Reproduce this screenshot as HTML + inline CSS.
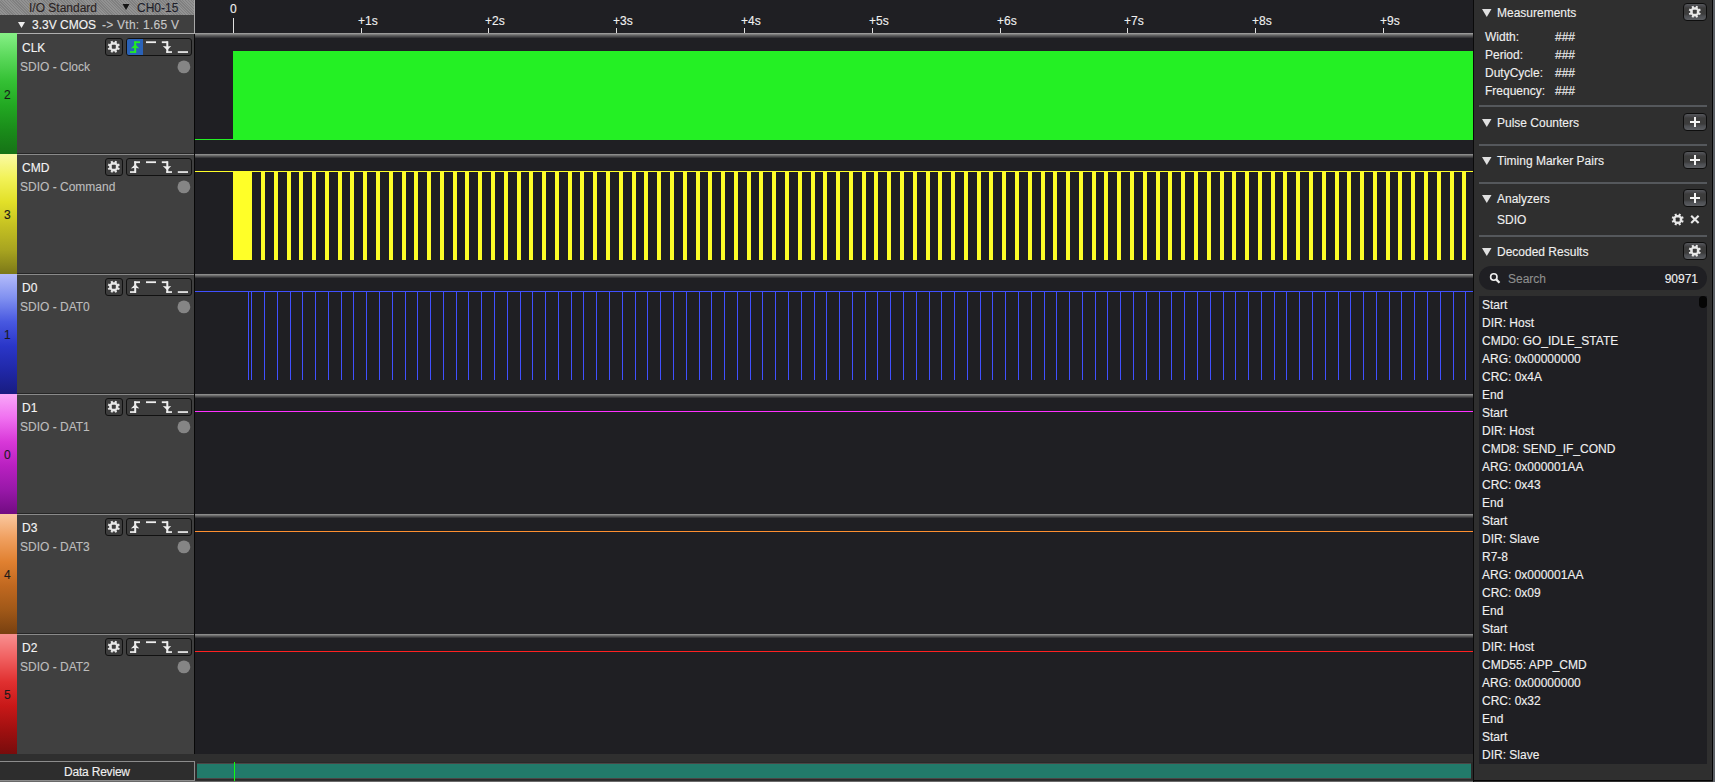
<!DOCTYPE html>
<html><head><meta charset="utf-8">
<style>
*{margin:0;padding:0;box-sizing:border-box}
html,body{width:1715px;height:782px;overflow:hidden;background:#2f2f2f;font-family:"Liberation Sans", sans-serif;font-size:12px;color:#e8e8e8}
.abs{position:absolute}
.t{position:absolute;white-space:pre;line-height:14px;-webkit-text-stroke:0.12px currentColor}
.btn{position:absolute;border:1px solid #0c0c0c;border-radius:4px;background:linear-gradient(#4a4a4a,#3c3c3c 60%,#444 100%)}
.pbtn{position:absolute;border:1px solid #0e0e0e;border-radius:4px;background:linear-gradient(#56585c 0,#4a4a4e 2px,#3c3c3c 4px,#3c3c3c 10px,#4c4e52 12px,#5c5e62 100%)}
</style></head><body>

<div class="abs" style="left:0;top:0;width:194px;height:15px;background:repeating-linear-gradient(45deg,#929292 0 1px,#808080 1px 2px)"></div>
<div class="abs" style="left:0;top:15px;width:194px;height:18px;background:#3f3f3f"></div>
<div class="t" style="left:29px;top:1px;color:#2a2222">I/O Standard</div>
<svg class="abs" style="left:0;top:0" width="195" height="33"><polygon points="122.5,4 129.5,4 126,10" fill="#151515"/><polygon points="18,22 25,22 21.5,28" fill="#eeeeee"/></svg>
<div class="t" style="left:137px;top:1px;color:#1e1e2a">CH0-15</div>
<div class="t" style="left:32px;top:18px;color:#f4f4f4">3.3V CMOS</div>
<div class="t" style="left:102px;top:18px;color:#c8c8c8;letter-spacing:0.25px">-&gt; Vth: 1.65 V</div>
<div class="abs" style="left:194px;top:0;width:1px;height:33px;background:#a8a8a8"></div>
<div class="abs" style="left:195px;top:0;width:1278px;height:33px;background:#1f1f23"></div>
<svg class="abs" style="left:0;top:0" width="1715" height="40"><rect x="233" y="18" width="1" height="15" fill="#e0e0e0"/><rect x="361" y="28" width="1" height="5" fill="#e0e0e0"/><rect x="488" y="28" width="1" height="5" fill="#e0e0e0"/><rect x="616" y="28" width="1" height="5" fill="#e0e0e0"/><rect x="744" y="28" width="1" height="5" fill="#e0e0e0"/><rect x="872" y="28" width="1" height="5" fill="#e0e0e0"/><rect x="1000" y="28" width="1" height="5" fill="#e0e0e0"/><rect x="1127" y="28" width="1" height="5" fill="#e0e0e0"/><rect x="1255" y="28" width="1" height="5" fill="#e0e0e0"/><rect x="1383" y="28" width="1" height="5" fill="#e0e0e0"/></svg>
<div class="t" style="left:230px;top:2px;color:#f0f0f0">0</div>
<div class="t" style="left:358px;top:14px;color:#f0f0f0">+1s</div>
<div class="t" style="left:485px;top:14px;color:#f0f0f0">+2s</div>
<div class="t" style="left:613px;top:14px;color:#f0f0f0">+3s</div>
<div class="t" style="left:741px;top:14px;color:#f0f0f0">+4s</div>
<div class="t" style="left:869px;top:14px;color:#f0f0f0">+5s</div>
<div class="t" style="left:997px;top:14px;color:#f0f0f0">+6s</div>
<div class="t" style="left:1124px;top:14px;color:#f0f0f0">+7s</div>
<div class="t" style="left:1252px;top:14px;color:#f0f0f0">+8s</div>
<div class="t" style="left:1380px;top:14px;color:#f0f0f0">+9s</div>
<div class="abs" style="left:17px;top:33px;width:178px;height:2px;background:linear-gradient(#b8b8b8,#989898)"></div>
<div class="abs" style="left:195px;top:33px;width:1278px;height:5px;background:linear-gradient(#a8a8a8,#6a6a6a 40%,#2a2a2e)"></div>
<div class="abs" style="left:0;top:33px;width:17px;height:121px;background:linear-gradient(#86f086,#5ad85a,#34c034,#22a822,#1a8c1a,#167216)"></div>
<div class="t" style="left:4px;top:88px;color:#1a1a1a">2</div>
<div class="abs" style="left:17px;top:34px;width:177px;height:120px;background:#404040"></div>
<div class="t" style="left:22px;top:41px;color:#f4f4f4">CLK</div>
<div class="t" style="left:20px;top:60px;color:#bdbdbd">SDIO - Clock</div>
<div class="abs" style="left:105px;top:38px;width:18px;height:18px;border:1px solid #111;border-radius:3px;background:#3c3c3c"></div>
<div class="abs" style="left:126px;top:38px;width:66px;height:18px;border:1px solid #111;border-radius:3px;background:#3c3c3c"></div>
<div class="abs" style="left:127px;top:39px;width:16px;height:16px;background:#2a62b8;border-radius:2px 0 0 2px"></div>
<svg class="abs" style="left:0;top:34px" width="195" height="40"><g transform="translate(113.8,12.8)"><circle r="4.6" fill="#e6e6e6"/><rect x="-1.05" y="-6.1" width="2.1" height="2.5" fill="#e6e6e6" transform="rotate(22.5)"/><rect x="-1.05" y="-6.1" width="2.1" height="2.5" fill="#e6e6e6" transform="rotate(67.5)"/><rect x="-1.05" y="-6.1" width="2.1" height="2.5" fill="#e6e6e6" transform="rotate(112.5)"/><rect x="-1.05" y="-6.1" width="2.1" height="2.5" fill="#e6e6e6" transform="rotate(157.5)"/><rect x="-1.05" y="-6.1" width="2.1" height="2.5" fill="#e6e6e6" transform="rotate(202.5)"/><rect x="-1.05" y="-6.1" width="2.1" height="2.5" fill="#e6e6e6" transform="rotate(247.5)"/><rect x="-1.05" y="-6.1" width="2.1" height="2.5" fill="#e6e6e6" transform="rotate(292.5)"/><rect x="-1.05" y="-6.1" width="2.1" height="2.5" fill="#e6e6e6" transform="rotate(337.5)"/><rect x="-2.0" y="-2.0" width="4.0" height="4.0" rx="0.8" fill="#3c3c3c"/></g><rect x="130" y="17.2" width="6" height="1.7" fill="#22ee22"/><rect x="134.2" y="7.3" width="2" height="11.6" fill="#22ee22"/><rect x="134.2" y="7.3" width="5.8" height="1.8" fill="#22ee22"/><polygon points="130.8,14.4 135.2,13.8 139.4,14.4 135.2,10.2" fill="#22ee22"/><rect x="146" y="7.3" width="10" height="1.8" fill="#eeeeee"/><rect x="161.8" y="7.3" width="6" height="1.8" fill="#eeeeee"/><rect x="166.3" y="7.3" width="2" height="11.6" fill="#eeeeee"/><rect x="166.3" y="17.2" width="5.7" height="1.7" fill="#eeeeee"/><polygon points="162.8,11.9 167.2,12.5 171.2,11.9 167.2,16.3" fill="#eeeeee"/><rect x="177.8" y="17.2" width="10.2" height="1.7" fill="#eeeeee"/></svg>
<svg class="abs" style="left:0;top:34px" width="195" height="45"><circle cx="183.9" cy="32.9" r="6.4" fill="#858585"/></svg>
<div class="abs" style="left:194px;top:34px;width:1px;height:120px;background:#080808"></div>
<div class="abs" style="left:195px;top:38px;width:1278px;height:116px;background:#1f1f23"></div>
<div class="abs" style="left:0;top:154px;width:17px;height:120px;background:linear-gradient(#fafaa4,#f2f258,#e2e028,#c4c022,#a8a420,#7c7818)"></div>
<div class="t" style="left:4px;top:208px;color:#1a1a1a">3</div>
<div class="abs" style="left:17px;top:154px;width:177px;height:120px;background:#404040"></div>
<div class="abs" style="left:17px;top:154px;width:178px;height:1px;background:#8a8a8a"></div>
<div class="abs" style="left:17px;top:153px;width:177px;height:1px;background:#262626"></div>
<div class="t" style="left:22px;top:161px;color:#f4f4f4">CMD</div>
<div class="t" style="left:20px;top:180px;color:#bdbdbd">SDIO - Command</div>
<div class="abs" style="left:105px;top:158px;width:18px;height:18px;border:1px solid #111;border-radius:3px;background:#3c3c3c"></div>
<div class="abs" style="left:126px;top:158px;width:66px;height:18px;border:1px solid #111;border-radius:3px;background:#3c3c3c"></div>
<svg class="abs" style="left:0;top:154px" width="195" height="40"><g transform="translate(113.8,12.8)"><circle r="4.6" fill="#e6e6e6"/><rect x="-1.05" y="-6.1" width="2.1" height="2.5" fill="#e6e6e6" transform="rotate(22.5)"/><rect x="-1.05" y="-6.1" width="2.1" height="2.5" fill="#e6e6e6" transform="rotate(67.5)"/><rect x="-1.05" y="-6.1" width="2.1" height="2.5" fill="#e6e6e6" transform="rotate(112.5)"/><rect x="-1.05" y="-6.1" width="2.1" height="2.5" fill="#e6e6e6" transform="rotate(157.5)"/><rect x="-1.05" y="-6.1" width="2.1" height="2.5" fill="#e6e6e6" transform="rotate(202.5)"/><rect x="-1.05" y="-6.1" width="2.1" height="2.5" fill="#e6e6e6" transform="rotate(247.5)"/><rect x="-1.05" y="-6.1" width="2.1" height="2.5" fill="#e6e6e6" transform="rotate(292.5)"/><rect x="-1.05" y="-6.1" width="2.1" height="2.5" fill="#e6e6e6" transform="rotate(337.5)"/><rect x="-2.0" y="-2.0" width="4.0" height="4.0" rx="0.8" fill="#3c3c3c"/></g><rect x="130" y="17.2" width="6" height="1.7" fill="#eeeeee"/><rect x="134.2" y="7.3" width="2" height="11.6" fill="#eeeeee"/><rect x="134.2" y="7.3" width="5.8" height="1.8" fill="#eeeeee"/><polygon points="130.8,14.4 135.2,13.8 139.4,14.4 135.2,10.2" fill="#eeeeee"/><rect x="146" y="7.3" width="10" height="1.8" fill="#eeeeee"/><rect x="161.8" y="7.3" width="6" height="1.8" fill="#eeeeee"/><rect x="166.3" y="7.3" width="2" height="11.6" fill="#eeeeee"/><rect x="166.3" y="17.2" width="5.7" height="1.7" fill="#eeeeee"/><polygon points="162.8,11.9 167.2,12.5 171.2,11.9 167.2,16.3" fill="#eeeeee"/><rect x="177.8" y="17.2" width="10.2" height="1.7" fill="#eeeeee"/></svg>
<svg class="abs" style="left:0;top:154px" width="195" height="45"><circle cx="183.9" cy="32.9" r="6.4" fill="#858585"/></svg>
<div class="abs" style="left:194px;top:154px;width:1px;height:120px;background:#080808"></div>
<div class="abs" style="left:195px;top:154px;width:1278px;height:120px;background:#1f1f23"></div>
<div class="abs" style="left:195px;top:154px;width:1278px;height:4px;background:linear-gradient(#9a9a9a,#5e5e5e 50%,#2a2a2e)"></div>
<div class="abs" style="left:0;top:274px;width:17px;height:120px;background:linear-gradient(#b4bcfa,#8090f0,#4858e0,#2a36c8,#2028a8,#181c80)"></div>
<div class="t" style="left:4px;top:328px;color:#1a1a1a">1</div>
<div class="abs" style="left:17px;top:274px;width:177px;height:120px;background:#404040"></div>
<div class="abs" style="left:17px;top:274px;width:178px;height:1px;background:#8a8a8a"></div>
<div class="abs" style="left:17px;top:273px;width:177px;height:1px;background:#262626"></div>
<div class="t" style="left:22px;top:281px;color:#f4f4f4">D0</div>
<div class="t" style="left:20px;top:300px;color:#bdbdbd">SDIO - DAT0</div>
<div class="abs" style="left:105px;top:278px;width:18px;height:18px;border:1px solid #111;border-radius:3px;background:#3c3c3c"></div>
<div class="abs" style="left:126px;top:278px;width:66px;height:18px;border:1px solid #111;border-radius:3px;background:#3c3c3c"></div>
<svg class="abs" style="left:0;top:274px" width="195" height="40"><g transform="translate(113.8,12.8)"><circle r="4.6" fill="#e6e6e6"/><rect x="-1.05" y="-6.1" width="2.1" height="2.5" fill="#e6e6e6" transform="rotate(22.5)"/><rect x="-1.05" y="-6.1" width="2.1" height="2.5" fill="#e6e6e6" transform="rotate(67.5)"/><rect x="-1.05" y="-6.1" width="2.1" height="2.5" fill="#e6e6e6" transform="rotate(112.5)"/><rect x="-1.05" y="-6.1" width="2.1" height="2.5" fill="#e6e6e6" transform="rotate(157.5)"/><rect x="-1.05" y="-6.1" width="2.1" height="2.5" fill="#e6e6e6" transform="rotate(202.5)"/><rect x="-1.05" y="-6.1" width="2.1" height="2.5" fill="#e6e6e6" transform="rotate(247.5)"/><rect x="-1.05" y="-6.1" width="2.1" height="2.5" fill="#e6e6e6" transform="rotate(292.5)"/><rect x="-1.05" y="-6.1" width="2.1" height="2.5" fill="#e6e6e6" transform="rotate(337.5)"/><rect x="-2.0" y="-2.0" width="4.0" height="4.0" rx="0.8" fill="#3c3c3c"/></g><rect x="130" y="17.2" width="6" height="1.7" fill="#eeeeee"/><rect x="134.2" y="7.3" width="2" height="11.6" fill="#eeeeee"/><rect x="134.2" y="7.3" width="5.8" height="1.8" fill="#eeeeee"/><polygon points="130.8,14.4 135.2,13.8 139.4,14.4 135.2,10.2" fill="#eeeeee"/><rect x="146" y="7.3" width="10" height="1.8" fill="#eeeeee"/><rect x="161.8" y="7.3" width="6" height="1.8" fill="#eeeeee"/><rect x="166.3" y="7.3" width="2" height="11.6" fill="#eeeeee"/><rect x="166.3" y="17.2" width="5.7" height="1.7" fill="#eeeeee"/><polygon points="162.8,11.9 167.2,12.5 171.2,11.9 167.2,16.3" fill="#eeeeee"/><rect x="177.8" y="17.2" width="10.2" height="1.7" fill="#eeeeee"/></svg>
<svg class="abs" style="left:0;top:274px" width="195" height="45"><circle cx="183.9" cy="32.9" r="6.4" fill="#858585"/></svg>
<div class="abs" style="left:194px;top:274px;width:1px;height:120px;background:#080808"></div>
<div class="abs" style="left:195px;top:274px;width:1278px;height:120px;background:#1f1f23"></div>
<div class="abs" style="left:195px;top:274px;width:1278px;height:4px;background:linear-gradient(#9a9a9a,#5e5e5e 50%,#2a2a2e)"></div>
<div class="abs" style="left:0;top:394px;width:17px;height:120px;background:linear-gradient(#f8a8f8,#f070f0,#d838d8,#b820c0,#9818a8,#720c82)"></div>
<div class="t" style="left:4px;top:448px;color:#1a1a1a">0</div>
<div class="abs" style="left:17px;top:394px;width:177px;height:120px;background:#404040"></div>
<div class="abs" style="left:17px;top:394px;width:178px;height:1px;background:#8a8a8a"></div>
<div class="abs" style="left:17px;top:393px;width:177px;height:1px;background:#262626"></div>
<div class="t" style="left:22px;top:401px;color:#f4f4f4">D1</div>
<div class="t" style="left:20px;top:420px;color:#bdbdbd">SDIO - DAT1</div>
<div class="abs" style="left:105px;top:398px;width:18px;height:18px;border:1px solid #111;border-radius:3px;background:#3c3c3c"></div>
<div class="abs" style="left:126px;top:398px;width:66px;height:18px;border:1px solid #111;border-radius:3px;background:#3c3c3c"></div>
<svg class="abs" style="left:0;top:394px" width="195" height="40"><g transform="translate(113.8,12.8)"><circle r="4.6" fill="#e6e6e6"/><rect x="-1.05" y="-6.1" width="2.1" height="2.5" fill="#e6e6e6" transform="rotate(22.5)"/><rect x="-1.05" y="-6.1" width="2.1" height="2.5" fill="#e6e6e6" transform="rotate(67.5)"/><rect x="-1.05" y="-6.1" width="2.1" height="2.5" fill="#e6e6e6" transform="rotate(112.5)"/><rect x="-1.05" y="-6.1" width="2.1" height="2.5" fill="#e6e6e6" transform="rotate(157.5)"/><rect x="-1.05" y="-6.1" width="2.1" height="2.5" fill="#e6e6e6" transform="rotate(202.5)"/><rect x="-1.05" y="-6.1" width="2.1" height="2.5" fill="#e6e6e6" transform="rotate(247.5)"/><rect x="-1.05" y="-6.1" width="2.1" height="2.5" fill="#e6e6e6" transform="rotate(292.5)"/><rect x="-1.05" y="-6.1" width="2.1" height="2.5" fill="#e6e6e6" transform="rotate(337.5)"/><rect x="-2.0" y="-2.0" width="4.0" height="4.0" rx="0.8" fill="#3c3c3c"/></g><rect x="130" y="17.2" width="6" height="1.7" fill="#eeeeee"/><rect x="134.2" y="7.3" width="2" height="11.6" fill="#eeeeee"/><rect x="134.2" y="7.3" width="5.8" height="1.8" fill="#eeeeee"/><polygon points="130.8,14.4 135.2,13.8 139.4,14.4 135.2,10.2" fill="#eeeeee"/><rect x="146" y="7.3" width="10" height="1.8" fill="#eeeeee"/><rect x="161.8" y="7.3" width="6" height="1.8" fill="#eeeeee"/><rect x="166.3" y="7.3" width="2" height="11.6" fill="#eeeeee"/><rect x="166.3" y="17.2" width="5.7" height="1.7" fill="#eeeeee"/><polygon points="162.8,11.9 167.2,12.5 171.2,11.9 167.2,16.3" fill="#eeeeee"/><rect x="177.8" y="17.2" width="10.2" height="1.7" fill="#eeeeee"/></svg>
<svg class="abs" style="left:0;top:394px" width="195" height="45"><circle cx="183.9" cy="32.9" r="6.4" fill="#858585"/></svg>
<div class="abs" style="left:194px;top:394px;width:1px;height:120px;background:#080808"></div>
<div class="abs" style="left:195px;top:394px;width:1278px;height:120px;background:#1f1f23"></div>
<div class="abs" style="left:195px;top:394px;width:1278px;height:4px;background:linear-gradient(#9a9a9a,#5e5e5e 50%,#2a2a2e)"></div>
<div class="abs" style="left:0;top:514px;width:17px;height:120px;background:linear-gradient(#fac8a0,#f0a060,#e08030,#c06820,#a05818,#784010)"></div>
<div class="t" style="left:4px;top:568px;color:#1a1a1a">4</div>
<div class="abs" style="left:17px;top:514px;width:177px;height:120px;background:#404040"></div>
<div class="abs" style="left:17px;top:514px;width:178px;height:1px;background:#8a8a8a"></div>
<div class="abs" style="left:17px;top:513px;width:177px;height:1px;background:#262626"></div>
<div class="t" style="left:22px;top:521px;color:#f4f4f4">D3</div>
<div class="t" style="left:20px;top:540px;color:#bdbdbd">SDIO - DAT3</div>
<div class="abs" style="left:105px;top:518px;width:18px;height:18px;border:1px solid #111;border-radius:3px;background:#3c3c3c"></div>
<div class="abs" style="left:126px;top:518px;width:66px;height:18px;border:1px solid #111;border-radius:3px;background:#3c3c3c"></div>
<svg class="abs" style="left:0;top:514px" width="195" height="40"><g transform="translate(113.8,12.8)"><circle r="4.6" fill="#e6e6e6"/><rect x="-1.05" y="-6.1" width="2.1" height="2.5" fill="#e6e6e6" transform="rotate(22.5)"/><rect x="-1.05" y="-6.1" width="2.1" height="2.5" fill="#e6e6e6" transform="rotate(67.5)"/><rect x="-1.05" y="-6.1" width="2.1" height="2.5" fill="#e6e6e6" transform="rotate(112.5)"/><rect x="-1.05" y="-6.1" width="2.1" height="2.5" fill="#e6e6e6" transform="rotate(157.5)"/><rect x="-1.05" y="-6.1" width="2.1" height="2.5" fill="#e6e6e6" transform="rotate(202.5)"/><rect x="-1.05" y="-6.1" width="2.1" height="2.5" fill="#e6e6e6" transform="rotate(247.5)"/><rect x="-1.05" y="-6.1" width="2.1" height="2.5" fill="#e6e6e6" transform="rotate(292.5)"/><rect x="-1.05" y="-6.1" width="2.1" height="2.5" fill="#e6e6e6" transform="rotate(337.5)"/><rect x="-2.0" y="-2.0" width="4.0" height="4.0" rx="0.8" fill="#3c3c3c"/></g><rect x="130" y="17.2" width="6" height="1.7" fill="#eeeeee"/><rect x="134.2" y="7.3" width="2" height="11.6" fill="#eeeeee"/><rect x="134.2" y="7.3" width="5.8" height="1.8" fill="#eeeeee"/><polygon points="130.8,14.4 135.2,13.8 139.4,14.4 135.2,10.2" fill="#eeeeee"/><rect x="146" y="7.3" width="10" height="1.8" fill="#eeeeee"/><rect x="161.8" y="7.3" width="6" height="1.8" fill="#eeeeee"/><rect x="166.3" y="7.3" width="2" height="11.6" fill="#eeeeee"/><rect x="166.3" y="17.2" width="5.7" height="1.7" fill="#eeeeee"/><polygon points="162.8,11.9 167.2,12.5 171.2,11.9 167.2,16.3" fill="#eeeeee"/><rect x="177.8" y="17.2" width="10.2" height="1.7" fill="#eeeeee"/></svg>
<svg class="abs" style="left:0;top:514px" width="195" height="45"><circle cx="183.9" cy="32.9" r="6.4" fill="#858585"/></svg>
<div class="abs" style="left:194px;top:514px;width:1px;height:120px;background:#080808"></div>
<div class="abs" style="left:195px;top:514px;width:1278px;height:120px;background:#1f1f23"></div>
<div class="abs" style="left:195px;top:514px;width:1278px;height:4px;background:linear-gradient(#9a9a9a,#5e5e5e 50%,#2a2a2e)"></div>
<div class="abs" style="left:0;top:634px;width:17px;height:120px;background:linear-gradient(#f89090,#f06060,#e03030,#c81818,#a01010,#780c0c)"></div>
<div class="t" style="left:4px;top:688px;color:#1a1a1a">5</div>
<div class="abs" style="left:17px;top:634px;width:177px;height:120px;background:#404040"></div>
<div class="abs" style="left:17px;top:634px;width:178px;height:1px;background:#8a8a8a"></div>
<div class="abs" style="left:17px;top:633px;width:177px;height:1px;background:#262626"></div>
<div class="t" style="left:22px;top:641px;color:#f4f4f4">D2</div>
<div class="t" style="left:20px;top:660px;color:#bdbdbd">SDIO - DAT2</div>
<div class="abs" style="left:105px;top:638px;width:18px;height:18px;border:1px solid #111;border-radius:3px;background:#3c3c3c"></div>
<div class="abs" style="left:126px;top:638px;width:66px;height:18px;border:1px solid #111;border-radius:3px;background:#3c3c3c"></div>
<svg class="abs" style="left:0;top:634px" width="195" height="40"><g transform="translate(113.8,12.8)"><circle r="4.6" fill="#e6e6e6"/><rect x="-1.05" y="-6.1" width="2.1" height="2.5" fill="#e6e6e6" transform="rotate(22.5)"/><rect x="-1.05" y="-6.1" width="2.1" height="2.5" fill="#e6e6e6" transform="rotate(67.5)"/><rect x="-1.05" y="-6.1" width="2.1" height="2.5" fill="#e6e6e6" transform="rotate(112.5)"/><rect x="-1.05" y="-6.1" width="2.1" height="2.5" fill="#e6e6e6" transform="rotate(157.5)"/><rect x="-1.05" y="-6.1" width="2.1" height="2.5" fill="#e6e6e6" transform="rotate(202.5)"/><rect x="-1.05" y="-6.1" width="2.1" height="2.5" fill="#e6e6e6" transform="rotate(247.5)"/><rect x="-1.05" y="-6.1" width="2.1" height="2.5" fill="#e6e6e6" transform="rotate(292.5)"/><rect x="-1.05" y="-6.1" width="2.1" height="2.5" fill="#e6e6e6" transform="rotate(337.5)"/><rect x="-2.0" y="-2.0" width="4.0" height="4.0" rx="0.8" fill="#3c3c3c"/></g><rect x="130" y="17.2" width="6" height="1.7" fill="#eeeeee"/><rect x="134.2" y="7.3" width="2" height="11.6" fill="#eeeeee"/><rect x="134.2" y="7.3" width="5.8" height="1.8" fill="#eeeeee"/><polygon points="130.8,14.4 135.2,13.8 139.4,14.4 135.2,10.2" fill="#eeeeee"/><rect x="146" y="7.3" width="10" height="1.8" fill="#eeeeee"/><rect x="161.8" y="7.3" width="6" height="1.8" fill="#eeeeee"/><rect x="166.3" y="7.3" width="2" height="11.6" fill="#eeeeee"/><rect x="166.3" y="17.2" width="5.7" height="1.7" fill="#eeeeee"/><polygon points="162.8,11.9 167.2,12.5 171.2,11.9 167.2,16.3" fill="#eeeeee"/><rect x="177.8" y="17.2" width="10.2" height="1.7" fill="#eeeeee"/></svg>
<svg class="abs" style="left:0;top:634px" width="195" height="45"><circle cx="183.9" cy="32.9" r="6.4" fill="#858585"/></svg>
<div class="abs" style="left:194px;top:634px;width:1px;height:120px;background:#080808"></div>
<div class="abs" style="left:195px;top:634px;width:1278px;height:120px;background:#1f1f23"></div>
<div class="abs" style="left:195px;top:634px;width:1278px;height:4px;background:linear-gradient(#9a9a9a,#5e5e5e 50%,#2a2a2e)"></div>
<div id="icons"></div>
<svg class="abs" style="left:0;top:0" width="1715" height="782"><rect x="195" y="139" width="38" height="1" fill="#24f024"/><rect x="233" y="51" width="1240" height="89" fill="#24f024"/><rect x="195" y="171" width="1278" height="1" fill="#ffff28"/><rect x="233" y="171" width="19" height="89" fill="#ffff28"/><rect x="261" y="171" width="4" height="89" fill="#ffff28"/><rect x="274" y="171" width="4" height="89" fill="#ffff28"/><rect x="287" y="171" width="4" height="89" fill="#ffff28"/><rect x="299" y="171" width="4" height="89" fill="#ffff28"/><rect x="312" y="171" width="4" height="89" fill="#ffff28"/><rect x="325" y="171" width="4" height="89" fill="#ffff28"/><rect x="338" y="171" width="4" height="89" fill="#ffff28"/><rect x="350" y="171" width="4" height="89" fill="#ffff28"/><rect x="363" y="171" width="4" height="89" fill="#ffff28"/><rect x="376" y="171" width="4" height="89" fill="#ffff28"/><rect x="389" y="171" width="4" height="89" fill="#ffff28"/><rect x="402" y="171" width="4" height="89" fill="#ffff28"/><rect x="414" y="171" width="4" height="89" fill="#ffff28"/><rect x="427" y="171" width="4" height="89" fill="#ffff28"/><rect x="440" y="171" width="4" height="89" fill="#ffff28"/><rect x="453" y="171" width="4" height="89" fill="#ffff28"/><rect x="465" y="171" width="4" height="89" fill="#ffff28"/><rect x="478" y="171" width="4" height="89" fill="#ffff28"/><rect x="491" y="171" width="4" height="89" fill="#ffff28"/><rect x="504" y="171" width="4" height="89" fill="#ffff28"/><rect x="517" y="171" width="4" height="89" fill="#ffff28"/><rect x="529" y="171" width="4" height="89" fill="#ffff28"/><rect x="542" y="171" width="4" height="89" fill="#ffff28"/><rect x="555" y="171" width="4" height="89" fill="#ffff28"/><rect x="568" y="171" width="4" height="89" fill="#ffff28"/><rect x="580" y="171" width="4" height="89" fill="#ffff28"/><rect x="593" y="171" width="4" height="89" fill="#ffff28"/><rect x="606" y="171" width="4" height="89" fill="#ffff28"/><rect x="619" y="171" width="4" height="89" fill="#ffff28"/><rect x="632" y="171" width="4" height="89" fill="#ffff28"/><rect x="644" y="171" width="4" height="89" fill="#ffff28"/><rect x="657" y="171" width="4" height="89" fill="#ffff28"/><rect x="670" y="171" width="4" height="89" fill="#ffff28"/><rect x="683" y="171" width="4" height="89" fill="#ffff28"/><rect x="696" y="171" width="4" height="89" fill="#ffff28"/><rect x="708" y="171" width="4" height="89" fill="#ffff28"/><rect x="721" y="171" width="4" height="89" fill="#ffff28"/><rect x="734" y="171" width="4" height="89" fill="#ffff28"/><rect x="747" y="171" width="4" height="89" fill="#ffff28"/><rect x="759" y="171" width="4" height="89" fill="#ffff28"/><rect x="772" y="171" width="4" height="89" fill="#ffff28"/><rect x="785" y="171" width="4" height="89" fill="#ffff28"/><rect x="798" y="171" width="4" height="89" fill="#ffff28"/><rect x="811" y="171" width="4" height="89" fill="#ffff28"/><rect x="823" y="171" width="4" height="89" fill="#ffff28"/><rect x="836" y="171" width="4" height="89" fill="#ffff28"/><rect x="849" y="171" width="4" height="89" fill="#ffff28"/><rect x="862" y="171" width="4" height="89" fill="#ffff28"/><rect x="874" y="171" width="4" height="89" fill="#ffff28"/><rect x="887" y="171" width="4" height="89" fill="#ffff28"/><rect x="900" y="171" width="4" height="89" fill="#ffff28"/><rect x="913" y="171" width="4" height="89" fill="#ffff28"/><rect x="926" y="171" width="4" height="89" fill="#ffff28"/><rect x="938" y="171" width="4" height="89" fill="#ffff28"/><rect x="951" y="171" width="4" height="89" fill="#ffff28"/><rect x="964" y="171" width="4" height="89" fill="#ffff28"/><rect x="977" y="171" width="4" height="89" fill="#ffff28"/><rect x="989" y="171" width="4" height="89" fill="#ffff28"/><rect x="1002" y="171" width="4" height="89" fill="#ffff28"/><rect x="1015" y="171" width="4" height="89" fill="#ffff28"/><rect x="1028" y="171" width="4" height="89" fill="#ffff28"/><rect x="1041" y="171" width="4" height="89" fill="#ffff28"/><rect x="1053" y="171" width="4" height="89" fill="#ffff28"/><rect x="1066" y="171" width="4" height="89" fill="#ffff28"/><rect x="1079" y="171" width="4" height="89" fill="#ffff28"/><rect x="1092" y="171" width="4" height="89" fill="#ffff28"/><rect x="1104" y="171" width="4" height="89" fill="#ffff28"/><rect x="1117" y="171" width="4" height="89" fill="#ffff28"/><rect x="1130" y="171" width="4" height="89" fill="#ffff28"/><rect x="1143" y="171" width="4" height="89" fill="#ffff28"/><rect x="1156" y="171" width="4" height="89" fill="#ffff28"/><rect x="1168" y="171" width="4" height="89" fill="#ffff28"/><rect x="1181" y="171" width="4" height="89" fill="#ffff28"/><rect x="1194" y="171" width="4" height="89" fill="#ffff28"/><rect x="1207" y="171" width="4" height="89" fill="#ffff28"/><rect x="1220" y="171" width="4" height="89" fill="#ffff28"/><rect x="1232" y="171" width="4" height="89" fill="#ffff28"/><rect x="1245" y="171" width="4" height="89" fill="#ffff28"/><rect x="1258" y="171" width="4" height="89" fill="#ffff28"/><rect x="1271" y="171" width="4" height="89" fill="#ffff28"/><rect x="1283" y="171" width="4" height="89" fill="#ffff28"/><rect x="1296" y="171" width="4" height="89" fill="#ffff28"/><rect x="1309" y="171" width="4" height="89" fill="#ffff28"/><rect x="1322" y="171" width="4" height="89" fill="#ffff28"/><rect x="1335" y="171" width="4" height="89" fill="#ffff28"/><rect x="1347" y="171" width="4" height="89" fill="#ffff28"/><rect x="1360" y="171" width="4" height="89" fill="#ffff28"/><rect x="1373" y="171" width="4" height="89" fill="#ffff28"/><rect x="1386" y="171" width="4" height="89" fill="#ffff28"/><rect x="1398" y="171" width="4" height="89" fill="#ffff28"/><rect x="1411" y="171" width="4" height="89" fill="#ffff28"/><rect x="1424" y="171" width="4" height="89" fill="#ffff28"/><rect x="1437" y="171" width="4" height="89" fill="#ffff28"/><rect x="1450" y="171" width="4" height="89" fill="#ffff28"/><rect x="1462" y="171" width="4" height="89" fill="#ffff28"/><rect x="195" y="291" width="1278" height="1" fill="#4050ff"/><rect x="248" y="291" width="1" height="89" fill="#4050ff"/><rect x="251" y="291" width="1" height="89" fill="#4050ff"/><rect x="264" y="291" width="1" height="89" fill="#4050ff"/><rect x="277" y="291" width="1" height="89" fill="#4050ff"/><rect x="290" y="291" width="1" height="89" fill="#4050ff"/><rect x="302" y="291" width="1" height="89" fill="#4050ff"/><rect x="315" y="291" width="1" height="89" fill="#4050ff"/><rect x="328" y="291" width="1" height="89" fill="#4050ff"/><rect x="341" y="291" width="1" height="89" fill="#4050ff"/><rect x="353" y="291" width="1" height="89" fill="#4050ff"/><rect x="366" y="291" width="1" height="89" fill="#4050ff"/><rect x="379" y="291" width="1" height="89" fill="#4050ff"/><rect x="392" y="291" width="1" height="89" fill="#4050ff"/><rect x="405" y="291" width="1" height="89" fill="#4050ff"/><rect x="417" y="291" width="1" height="89" fill="#4050ff"/><rect x="430" y="291" width="1" height="89" fill="#4050ff"/><rect x="443" y="291" width="1" height="89" fill="#4050ff"/><rect x="456" y="291" width="1" height="89" fill="#4050ff"/><rect x="468" y="291" width="1" height="89" fill="#4050ff"/><rect x="481" y="291" width="1" height="89" fill="#4050ff"/><rect x="494" y="291" width="1" height="89" fill="#4050ff"/><rect x="507" y="291" width="1" height="89" fill="#4050ff"/><rect x="520" y="291" width="1" height="89" fill="#4050ff"/><rect x="532" y="291" width="1" height="89" fill="#4050ff"/><rect x="545" y="291" width="1" height="89" fill="#4050ff"/><rect x="558" y="291" width="1" height="89" fill="#4050ff"/><rect x="571" y="291" width="1" height="89" fill="#4050ff"/><rect x="583" y="291" width="1" height="89" fill="#4050ff"/><rect x="596" y="291" width="1" height="89" fill="#4050ff"/><rect x="609" y="291" width="1" height="89" fill="#4050ff"/><rect x="622" y="291" width="1" height="89" fill="#4050ff"/><rect x="635" y="291" width="1" height="89" fill="#4050ff"/><rect x="647" y="291" width="1" height="89" fill="#4050ff"/><rect x="660" y="291" width="1" height="89" fill="#4050ff"/><rect x="673" y="291" width="1" height="89" fill="#4050ff"/><rect x="686" y="291" width="1" height="89" fill="#4050ff"/><rect x="699" y="291" width="1" height="89" fill="#4050ff"/><rect x="711" y="291" width="1" height="89" fill="#4050ff"/><rect x="724" y="291" width="1" height="89" fill="#4050ff"/><rect x="737" y="291" width="1" height="89" fill="#4050ff"/><rect x="750" y="291" width="1" height="89" fill="#4050ff"/><rect x="762" y="291" width="1" height="89" fill="#4050ff"/><rect x="775" y="291" width="1" height="89" fill="#4050ff"/><rect x="788" y="291" width="1" height="89" fill="#4050ff"/><rect x="801" y="291" width="1" height="89" fill="#4050ff"/><rect x="814" y="291" width="1" height="89" fill="#4050ff"/><rect x="826" y="291" width="1" height="89" fill="#4050ff"/><rect x="839" y="291" width="1" height="89" fill="#4050ff"/><rect x="852" y="291" width="1" height="89" fill="#4050ff"/><rect x="865" y="291" width="1" height="89" fill="#4050ff"/><rect x="877" y="291" width="1" height="89" fill="#4050ff"/><rect x="890" y="291" width="1" height="89" fill="#4050ff"/><rect x="903" y="291" width="1" height="89" fill="#4050ff"/><rect x="916" y="291" width="1" height="89" fill="#4050ff"/><rect x="929" y="291" width="1" height="89" fill="#4050ff"/><rect x="941" y="291" width="1" height="89" fill="#4050ff"/><rect x="954" y="291" width="1" height="89" fill="#4050ff"/><rect x="967" y="291" width="1" height="89" fill="#4050ff"/><rect x="980" y="291" width="1" height="89" fill="#4050ff"/><rect x="992" y="291" width="1" height="89" fill="#4050ff"/><rect x="1005" y="291" width="1" height="89" fill="#4050ff"/><rect x="1018" y="291" width="1" height="89" fill="#4050ff"/><rect x="1031" y="291" width="1" height="89" fill="#4050ff"/><rect x="1044" y="291" width="1" height="89" fill="#4050ff"/><rect x="1056" y="291" width="1" height="89" fill="#4050ff"/><rect x="1069" y="291" width="1" height="89" fill="#4050ff"/><rect x="1082" y="291" width="1" height="89" fill="#4050ff"/><rect x="1095" y="291" width="1" height="89" fill="#4050ff"/><rect x="1107" y="291" width="1" height="89" fill="#4050ff"/><rect x="1120" y="291" width="1" height="89" fill="#4050ff"/><rect x="1133" y="291" width="1" height="89" fill="#4050ff"/><rect x="1146" y="291" width="1" height="89" fill="#4050ff"/><rect x="1159" y="291" width="1" height="89" fill="#4050ff"/><rect x="1171" y="291" width="1" height="89" fill="#4050ff"/><rect x="1184" y="291" width="1" height="89" fill="#4050ff"/><rect x="1197" y="291" width="1" height="89" fill="#4050ff"/><rect x="1210" y="291" width="1" height="89" fill="#4050ff"/><rect x="1223" y="291" width="1" height="89" fill="#4050ff"/><rect x="1235" y="291" width="1" height="89" fill="#4050ff"/><rect x="1248" y="291" width="1" height="89" fill="#4050ff"/><rect x="1261" y="291" width="1" height="89" fill="#4050ff"/><rect x="1274" y="291" width="1" height="89" fill="#4050ff"/><rect x="1286" y="291" width="1" height="89" fill="#4050ff"/><rect x="1299" y="291" width="1" height="89" fill="#4050ff"/><rect x="1312" y="291" width="1" height="89" fill="#4050ff"/><rect x="1325" y="291" width="1" height="89" fill="#4050ff"/><rect x="1338" y="291" width="1" height="89" fill="#4050ff"/><rect x="1350" y="291" width="1" height="89" fill="#4050ff"/><rect x="1363" y="291" width="1" height="89" fill="#4050ff"/><rect x="1376" y="291" width="1" height="89" fill="#4050ff"/><rect x="1389" y="291" width="1" height="89" fill="#4050ff"/><rect x="1401" y="291" width="1" height="89" fill="#4050ff"/><rect x="1414" y="291" width="1" height="89" fill="#4050ff"/><rect x="1427" y="291" width="1" height="89" fill="#4050ff"/><rect x="1440" y="291" width="1" height="89" fill="#4050ff"/><rect x="1453" y="291" width="1" height="89" fill="#4050ff"/><rect x="1465" y="291" width="1" height="89" fill="#4050ff"/><rect x="195" y="411" width="1278" height="1" fill="#ff30ff"/><rect x="195" y="531" width="1278" height="1" fill="#ff9030"/><rect x="195" y="651" width="1278" height="1" fill="#ff2020"/></svg>
<div class="abs" style="left:1473px;top:0;width:1px;height:782px;background:#0a0a0a"></div>
<div class="abs" style="left:1474px;top:0;width:238px;height:780px;background:#2f2f2f"></div>
<div class="abs" style="left:1712px;top:0;width:1px;height:781px;background:#050505"></div>
<div class="abs" style="left:1713px;top:0;width:2px;height:782px;background:#5c6066"></div>
<div class="abs" style="left:1474px;top:780px;width:239px;height:1px;background:#050505"></div>
<div class="abs" style="left:0;top:754px;width:1473px;height:7px;background:#2f2f2f"></div>
<div class="abs" style="left:0;top:761px;width:195px;height:20px;border:1px solid #8c8c8c;border-left:none;background:#2d2d2d"></div>
<div class="t" style="left:64px;top:765px;color:#f0f0f0;letter-spacing:-0.2px">Data Review</div>
<div class="abs" style="left:196px;top:762px;width:1277px;height:18px;background:#2a2a2a"></div>
<div class="abs" style="left:197px;top:763px;width:1274px;height:1px;background:#4a4646"></div>
<div class="abs" style="left:197px;top:778px;width:1274px;height:1px;background:#4a4646"></div>
<div class="abs" style="left:197px;top:764px;width:1274px;height:14px;background:#227a6a"></div>
<div class="abs" style="left:234px;top:762px;width:1px;height:19px;background:#10ff10"></div>
<div class="abs" style="left:0;top:781px;width:1473px;height:1px;background:#6a6a6a"></div>
<div class="t" style="left:1497px;top:6px;color:#f0f0f0;">Measurements</div>
<div class="pbtn" style="left:1683px;top:3px;width:24px;height:18px"></div>
<div class="t" style="left:1485px;top:30px;color:#f0f0f0;">Width:</div>
<div class="t" style="left:1555px;top:30px;color:#f0f0f0;">###</div>
<div class="t" style="left:1485px;top:48px;color:#f0f0f0;">Period:</div>
<div class="t" style="left:1555px;top:48px;color:#f0f0f0;">###</div>
<div class="t" style="left:1485px;top:66px;color:#f0f0f0;">DutyCycle:</div>
<div class="t" style="left:1555px;top:66px;color:#f0f0f0;">###</div>
<div class="t" style="left:1485px;top:84px;color:#f0f0f0;">Frequency:</div>
<div class="t" style="left:1555px;top:84px;color:#f0f0f0;">###</div>
<div class="abs" style="left:1479px;top:105px;width:228px;height:2px;background:#55585c"></div>
<div class="abs" style="left:1479px;top:144px;width:228px;height:2px;background:#55585c"></div>
<div class="abs" style="left:1479px;top:182px;width:228px;height:2px;background:#55585c"></div>
<div class="abs" style="left:1479px;top:235px;width:228px;height:2px;background:#55585c"></div>
<div class="t" style="left:1497px;top:116px;color:#f0f0f0;">Pulse Counters</div>
<div class="pbtn" style="left:1683px;top:113px;width:24px;height:18px"></div>
<div class="t" style="left:1497px;top:154px;color:#f0f0f0;">Timing Marker Pairs</div>
<div class="pbtn" style="left:1683px;top:151px;width:24px;height:18px"></div>
<div class="t" style="left:1497px;top:192px;color:#f0f0f0;">Analyzers</div>
<div class="pbtn" style="left:1683px;top:189px;width:24px;height:18px"></div>
<div class="t" style="left:1497px;top:213px;color:#f0f0f0;">SDIO</div>
<div class="t" style="left:1497px;top:245px;color:#f0f0f0;">Decoded Results</div>
<div class="pbtn" style="left:1683px;top:242px;width:24px;height:18px"></div>
<div class="abs" style="left:1479px;top:266px;width:228px;height:24px;border-radius:12px;background:#1f1f23"></div>
<div class="t" style="left:1508px;top:272px;color:#8e8e8e;">Search</div>
<div class="t" style="left:1600px;top:272px;width:98px;text-align:right;color:#f0f0f0">90971</div>
<div class="abs" style="left:1479px;top:296px;width:228px;height:468px;background:#1f1f23"></div>
<div class="t" style="left:1482px;top:298px;color:#f0f0f0;">Start</div>
<div class="t" style="left:1482px;top:316px;color:#f0f0f0;">DIR: Host</div>
<div class="t" style="left:1482px;top:334px;color:#f0f0f0;">CMD0: GO_IDLE_STATE</div>
<div class="t" style="left:1482px;top:352px;color:#f0f0f0;">ARG: 0x00000000</div>
<div class="t" style="left:1482px;top:370px;color:#f0f0f0;">CRC: 0x4A</div>
<div class="t" style="left:1482px;top:388px;color:#f0f0f0;">End</div>
<div class="t" style="left:1482px;top:406px;color:#f0f0f0;">Start</div>
<div class="t" style="left:1482px;top:424px;color:#f0f0f0;">DIR: Host</div>
<div class="t" style="left:1482px;top:442px;color:#f0f0f0;">CMD8: SEND_IF_COND</div>
<div class="t" style="left:1482px;top:460px;color:#f0f0f0;">ARG: 0x000001AA</div>
<div class="t" style="left:1482px;top:478px;color:#f0f0f0;">CRC: 0x43</div>
<div class="t" style="left:1482px;top:496px;color:#f0f0f0;">End</div>
<div class="t" style="left:1482px;top:514px;color:#f0f0f0;">Start</div>
<div class="t" style="left:1482px;top:532px;color:#f0f0f0;">DIR: Slave</div>
<div class="t" style="left:1482px;top:550px;color:#f0f0f0;">R7-8</div>
<div class="t" style="left:1482px;top:568px;color:#f0f0f0;">ARG: 0x000001AA</div>
<div class="t" style="left:1482px;top:586px;color:#f0f0f0;">CRC: 0x09</div>
<div class="t" style="left:1482px;top:604px;color:#f0f0f0;">End</div>
<div class="t" style="left:1482px;top:622px;color:#f0f0f0;">Start</div>
<div class="t" style="left:1482px;top:640px;color:#f0f0f0;">DIR: Host</div>
<div class="t" style="left:1482px;top:658px;color:#f0f0f0;">CMD55: APP_CMD</div>
<div class="t" style="left:1482px;top:676px;color:#f0f0f0;">ARG: 0x00000000</div>
<div class="t" style="left:1482px;top:694px;color:#f0f0f0;">CRC: 0x32</div>
<div class="t" style="left:1482px;top:712px;color:#f0f0f0;">End</div>
<div class="t" style="left:1482px;top:730px;color:#f0f0f0;">Start</div>
<div class="t" style="left:1482px;top:748px;color:#f0f0f0;">DIR: Slave</div>
<div class="abs" style="left:1699px;top:296px;width:8px;height:12px;border-radius:4px;background:#050505"></div>
<svg class="abs" style="left:1474px;top:0" width="241" height="782"><polygon points="8,9 17.5,9 12.75,17" fill="#e0e0e0"/><polygon points="8,119 17.5,119 12.75,127" fill="#e0e0e0"/><polygon points="8,157 17.5,157 12.75,165" fill="#e0e0e0"/><polygon points="8,195 17.5,195 12.75,203" fill="#e0e0e0"/><polygon points="8,248 17.5,248 12.75,256" fill="#e0e0e0"/><g transform="translate(220.79999999999995,11.8)"><circle r="4.6" fill="#e8e8e8"/><rect x="-1.05" y="-6.1" width="2.1" height="2.5" fill="#e8e8e8" transform="rotate(22.5)"/><rect x="-1.05" y="-6.1" width="2.1" height="2.5" fill="#e8e8e8" transform="rotate(67.5)"/><rect x="-1.05" y="-6.1" width="2.1" height="2.5" fill="#e8e8e8" transform="rotate(112.5)"/><rect x="-1.05" y="-6.1" width="2.1" height="2.5" fill="#e8e8e8" transform="rotate(157.5)"/><rect x="-1.05" y="-6.1" width="2.1" height="2.5" fill="#e8e8e8" transform="rotate(202.5)"/><rect x="-1.05" y="-6.1" width="2.1" height="2.5" fill="#e8e8e8" transform="rotate(247.5)"/><rect x="-1.05" y="-6.1" width="2.1" height="2.5" fill="#e8e8e8" transform="rotate(292.5)"/><rect x="-1.05" y="-6.1" width="2.1" height="2.5" fill="#e8e8e8" transform="rotate(337.5)"/><rect x="-2.0" y="-2.0" width="4.0" height="4.0" rx="0.8" fill="#3e3e3e"/></g><g transform="translate(220.79999999999995,250.8)"><circle r="4.6" fill="#e8e8e8"/><rect x="-1.05" y="-6.1" width="2.1" height="2.5" fill="#e8e8e8" transform="rotate(22.5)"/><rect x="-1.05" y="-6.1" width="2.1" height="2.5" fill="#e8e8e8" transform="rotate(67.5)"/><rect x="-1.05" y="-6.1" width="2.1" height="2.5" fill="#e8e8e8" transform="rotate(112.5)"/><rect x="-1.05" y="-6.1" width="2.1" height="2.5" fill="#e8e8e8" transform="rotate(157.5)"/><rect x="-1.05" y="-6.1" width="2.1" height="2.5" fill="#e8e8e8" transform="rotate(202.5)"/><rect x="-1.05" y="-6.1" width="2.1" height="2.5" fill="#e8e8e8" transform="rotate(247.5)"/><rect x="-1.05" y="-6.1" width="2.1" height="2.5" fill="#e8e8e8" transform="rotate(292.5)"/><rect x="-1.05" y="-6.1" width="2.1" height="2.5" fill="#e8e8e8" transform="rotate(337.5)"/><rect x="-2.0" y="-2.0" width="4.0" height="4.0" rx="0.8" fill="#3e3e3e"/></g><g transform="translate(203.70000000000005,219.5)"><circle r="4.6" fill="#e8e8e8"/><rect x="-1.05" y="-6.1" width="2.1" height="2.5" fill="#e8e8e8" transform="rotate(22.5)"/><rect x="-1.05" y="-6.1" width="2.1" height="2.5" fill="#e8e8e8" transform="rotate(67.5)"/><rect x="-1.05" y="-6.1" width="2.1" height="2.5" fill="#e8e8e8" transform="rotate(112.5)"/><rect x="-1.05" y="-6.1" width="2.1" height="2.5" fill="#e8e8e8" transform="rotate(157.5)"/><rect x="-1.05" y="-6.1" width="2.1" height="2.5" fill="#e8e8e8" transform="rotate(202.5)"/><rect x="-1.05" y="-6.1" width="2.1" height="2.5" fill="#e8e8e8" transform="rotate(247.5)"/><rect x="-1.05" y="-6.1" width="2.1" height="2.5" fill="#e8e8e8" transform="rotate(292.5)"/><rect x="-1.05" y="-6.1" width="2.1" height="2.5" fill="#e8e8e8" transform="rotate(337.5)"/><rect x="-2.0" y="-2.0" width="4.0" height="4.0" rx="0.8" fill="#2f2f2f"/></g><path d="M217.20000000000005,215.7 L224.5999999999999,223.1 M224.5999999999999,215.7 L217.20000000000005,223.1" stroke="#e8e8e8" stroke-width="2.1"/><rect x="216" y="121" width="10" height="2" fill="#f4f4f4"/><rect x="220" y="117" width="2" height="10" fill="#f4f4f4"/><rect x="216" y="159" width="10" height="2" fill="#f4f4f4"/><rect x="220" y="155" width="2" height="10" fill="#f4f4f4"/><rect x="216" y="197" width="10" height="2" fill="#f4f4f4"/><rect x="220" y="193" width="2" height="10" fill="#f4f4f4"/><circle cx="19.799999999999955" cy="277" r="3.2" fill="none" stroke="#eeeeee" stroke-width="1.6"/><path d="M22.40000000000009,279.6 L25.5,282.7" stroke="#eeeeee" stroke-width="2.2"/></svg>
</body></html>
